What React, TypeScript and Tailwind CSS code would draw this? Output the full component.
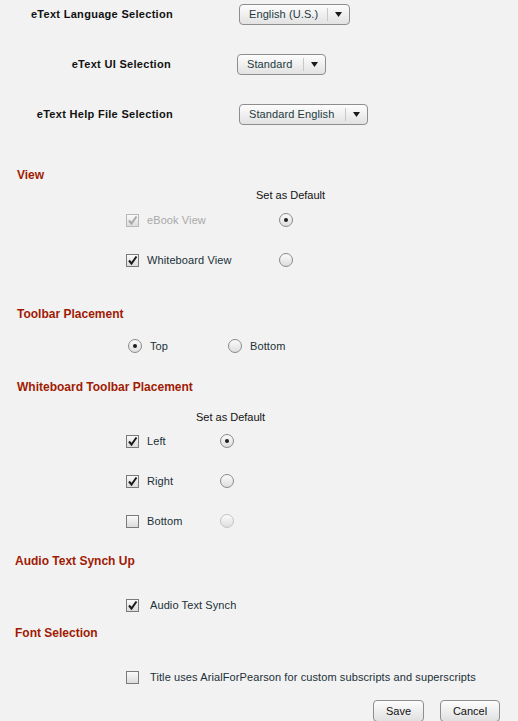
const font = "font-['Liberation_Sans',Arial,sans-serif]";

function Check({ checked, disabled }: { checked?: boolean; disabled?: boolean }) {
  return (
    <span
      className={`relative flex h-[13px] w-[13px] shrink-0 items-center justify-center border ${
        disabled ? "border-[#b8b8b8]" : "border-[#7a7a7a]"
      } bg-gradient-to-b from-[#fafafa] to-[#dcdcdc]`}
    >
      {checked && (
        <svg width="11" height="11" viewBox="0 0 11 11">
          <path
            d="M2 5.5 L4.5 8.5 L9.5 1.5"
            fill="none"
            stroke={disabled ? "#a8a8a8" : "#1b1b1b"}
            strokeWidth="2"
          />
        </svg>
      )}
    </span>
  );
}

function Radio({ on, faint }: { on?: boolean; faint?: boolean }) {
  return (
    <span
      className={`flex h-[14px] w-[14px] shrink-0 items-center justify-center rounded-full border ${
        faint ? "border-[#c4c4c4]" : "border-[#8a8a8a]"
      } bg-gradient-to-b from-[#fbfbfb] to-[#dedede]`}
    >
      {on && <span className="h-[4px] w-[4px] rounded-full bg-[#1e1e1e]" />}
    </span>
  );
}

function Select({ value, width, left }: { value: string; width: string; left: string }) {
  return (
    <div
      className={`${width} ${left} flex h-[21px] items-center rounded-[4px] border border-[#8e8e8e] bg-gradient-to-b from-[#fdfdfd] to-[#e2e2e2] text-[11px] tracking-[0.1px] text-[#1d3a40]`}
    >
      <span className="flex-1 pl-[9px]">{value}</span>
      <span className="h-[13px] w-px bg-[#c8c8c8]" />
      <span className="flex w-[21px] justify-center">
        <svg width="7" height="5" viewBox="0 0 7 5">
          <path d="M0 0 H7 L3.5 5 Z" fill="#1a1a1a" />
        </svg>
      </span>
    </div>
  );
}

function Heading({ children, className = "" }: { children: string; className?: string }) {
  return (
    <div className={`h-[14px] text-[12px] font-bold leading-[14px] text-[#a11a04] ${className}`}>
      {children}
    </div>
  );
}

export default function App() {
  return (
    <div className={`${font} h-[721px] w-[518px] overflow-hidden bg-[#f2f2f2] text-[11px] leading-[13px]`}>
      <div className="pt-[4px]">
        <div className="flex h-[21px] items-center">
          <div className="w-[173px] text-right font-bold tracking-[0.3px] text-[#111]">eText Language Selection</div>
          <Select value="English (U.S.)" width="w-[111px]" left="ml-[66px]" />
        </div>
        <div className="mt-[29px] flex h-[21px] items-center">
          <div className="w-[171px] text-right font-bold tracking-[0.3px] text-[#111]">eText UI Selection</div>
          <Select value="Standard" width="w-[89px]" left="ml-[66px]" />
        </div>
        <div className="mt-[29px] flex h-[21px] items-center">
          <div className="w-[173px] text-right font-bold tracking-[0.3px] text-[#111]">eText Help File Selection</div>
          <Select value="Standard English" width="w-[129px]" left="ml-[66px]" />
        </div>
      </div>

      <Heading className="ml-[17px] mt-[43px]">View</Heading>
      <div className="ml-[256px] mt-[7px] text-[#111]">Set as Default</div>
      <div className="mt-[11px] flex h-[14px] items-center pl-[126px] tracking-[0.1px]">
        <Check checked disabled />
        <span className="ml-[8px] w-[132px] text-[#a9a9a9]">eBook View</span>
        <Radio on />
      </div>
      <div className="mt-[26px] flex h-[14px] items-center pl-[126px] tracking-[0.1px]">
        <Check checked />
        <span className="ml-[8px] w-[132px] text-[#1a3038]">Whiteboard View</span>
        <Radio />
      </div>

      <Heading className="ml-[17px] mt-[40px]">Toolbar Placement</Heading>
      <div className="mt-[18px] flex h-[14px] items-center pl-[128px] tracking-[0.1px] text-[#1a3038]">
        <Radio on />
        <span className="ml-[8px] w-[78px]">Top</span>
        <Radio />
        <span className="ml-[8px]">Bottom</span>
      </div>

      <Heading className="ml-[17px] mt-[27px]">Whiteboard Toolbar Placement</Heading>
      <div className="ml-[196px] mt-[17px] text-[#111]">Set as Default</div>
      {[
        { label: "Left", checked: true, on: true },
        { label: "Right", checked: true, on: false },
        { label: "Bottom", checked: false, on: false, faint: true },
      ].map((r, i) => (
        <div
          key={r.label}
          className={`${i === 0 ? "mt-[10px]" : "mt-[26px]"} flex h-[14px] items-center pl-[126px] tracking-[0.1px]`}
        >
          <Check checked={r.checked} />
          <span className="ml-[8px] w-[73px] text-[#1a3038]">{r.label}</span>
          <Radio on={r.on} faint={r.faint} />
        </div>
      ))}

      <Heading className="ml-[15px] mt-[26px]">Audio Text Synch Up</Heading>
      <div className="mt-[30px] flex h-[14px] items-center pl-[126px] tracking-[0.1px] text-[#1a3038]">
        <Check checked />
        <span className="ml-[11px]">Audio Text Synch</span>
      </div>

      <Heading className="ml-[15px] mt-[14px]">Font Selection</Heading>
      <div className="mt-[30px] flex h-[14px] items-center pl-[126px] tracking-[0.1px] text-[#1a3038]">
        <Check />
        <span className="ml-[11px]">Title uses ArialForPearson for custom subscripts and superscripts</span>
      </div>

      <div className="mt-[16px] flex justify-end gap-[16px] pr-[18px]">
        <button className="h-[22px] w-[51px] rounded-[4px] border border-[#8e8e8e] bg-gradient-to-b from-[#fdfdfd] to-[#e0e0e0] text-[11px] text-[#111]">
          Save
        </button>
        <button className="h-[22px] w-[60px] rounded-[4px] border border-[#8e8e8e] bg-gradient-to-b from-[#fdfdfd] to-[#e0e0e0] text-[11px] text-[#111]">
          Cancel
        </button>
      </div>
    </div>
  );
}
